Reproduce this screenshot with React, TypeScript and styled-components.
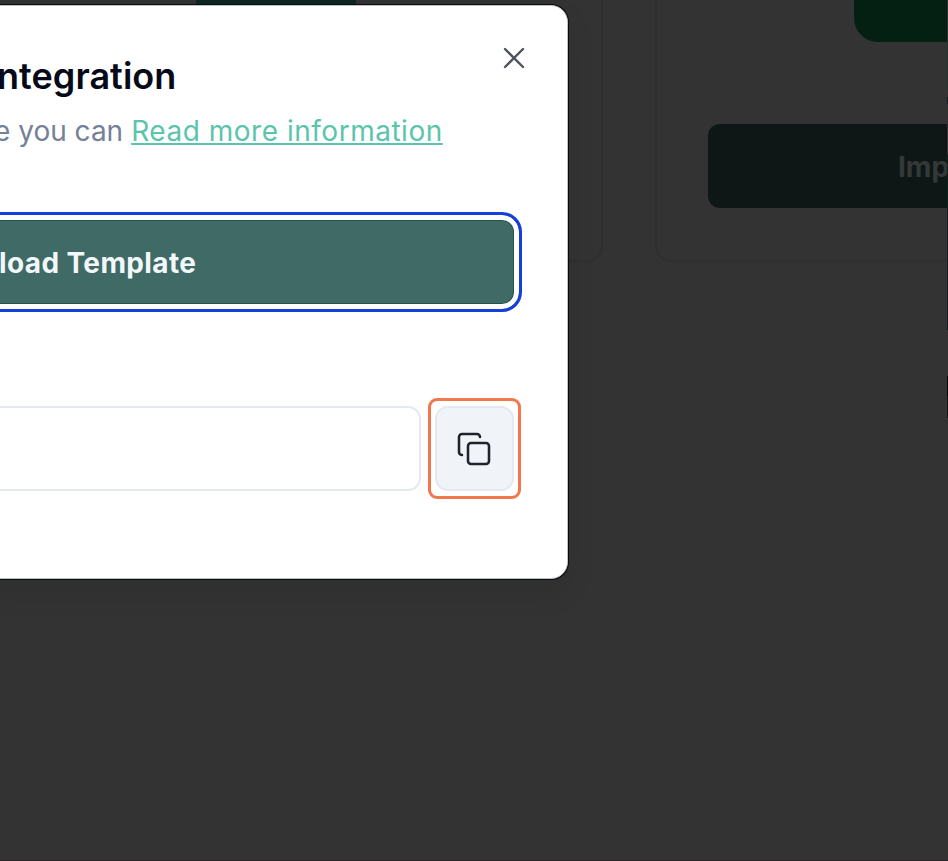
import React from "react";
import styled, { createGlobalStyle } from "styled-components";

const GlobalStyle = createGlobalStyle`
  *, *::before, *::after { box-sizing: border-box; }
  body { margin: 0; overflow: hidden; background: #333; font-family: "Inter", "Liberation Sans", sans-serif; }
  button { font: inherit; margin: 0; }
  h2, p { margin: 0; }
`;

const Page = styled.main`
  position: relative;
  width: 948px;
  height: 861px;
  overflow: hidden;
  background: #333;
  border-bottom: 1px solid #2b252b;
`;

const CardGrid = styled.div`
  display: grid;
  grid-template-columns: 603px 400px;
  column-gap: 52px;
  height: 262px;
`;

const Card = styled.section<{ $first?: boolean }>`
  display: flex;
  flex-direction: column;
  border: 2px solid #2f2f30;
  border-top: 0;
  border-left-width: ${(p) => (p.$first ? 0 : "2px")};
  border-radius: 0 0 16px 16px;
  padding-left: ${(p) => (p.$first ? "196px" : "51px")};
`;

const GreenTile = styled.div`
  width: 200px;
  height: 42px;
  margin-left: 146px;
  border-radius: 0 0 0 24px;
  background: #032013;
`;

const HiddenAction = styled.div`
  width: 160px;
  height: 10px;
  background: #0e2723;
`;

const ImportButton = styled.button`
  width: 330px;
  height: 84px;
  margin-top: 82px;
  padding: 2px 0 0 190px;
  border: 0;
  border-radius: 12px;
  background: #0e1716;
  color: #343838;
  text-align: left;
  font-size: 28px;
  font-weight: 700;
`;

const Dialog = styled.div`
  position: absolute;
  top: 5px;
  left: -20px;
  width: 588px;
  height: 574px;
  display: flex;
  flex-direction: column;
  padding-right: 46px;
  border: 1px solid #bdc3cc;
  border-radius: 17px;
  background: #fff;
  box-shadow: 0 0 0 1px #0b0b0c, 0 14px 30px rgba(0, 0, 0, 0.09);
`;

const Header = styled.header`
  display: flex;
  justify-content: space-between;
  height: 103px;
  padding: 48px 0 0 16px;
`;

const Title = styled.h2`
  font-size: 36px;
  line-height: 44px;
  font-weight: 600;
  letter-spacing: 0.05px;
  color: #060917;
  white-space: nowrap;
`;

const CloseButton = styled.button`
  width: 28px;
  height: 28px;
  margin: -10px -7px 0 0;
  padding: 0;
  border: 0;
  background: none;
  color: #4d525e;
`;

const Description = styled.p`
  display: flex;
  gap: 8px;
  height: 103px;
  padding-left: 13px;
  font-size: 28px;
  line-height: 44px;
  color: #748197;
  white-space: nowrap;
`;

const MoreLink = styled.a`
  color: #5bc4ac;
  letter-spacing: 0.52px;
  text-decoration: underline;
  text-decoration-thickness: 2px;
  text-underline-offset: 2px;
`;

const DownloadButton = styled.button`
  flex: none;
  width: 541px;
  height: 100px;
  padding: 2px 0 0 15px;
  border: 3px solid #143fdc;
  border-radius: 20px;
  background: #406a65;
  box-shadow: inset 0 0 0 5px #fff, inset 0 0 0 6px #24534e;
  color: #f2f7f9;
  text-align: left;
  font-size: 28px;
  font-weight: 700;
  letter-spacing: 0.38px;
`;

const CopyRow = styled.div`
  display: flex;
  align-items: center;
  gap: 8px;
  margin-top: 86px;
`;

const UrlInput = styled.input`
  width: 441px;
  height: 85px;
  margin-right: -1px;
  border: 2px solid #e4e9f1;
  border-radius: 13px;
  background: #fff;
  outline: 0;
`;

const CopyHighlight = styled.div`
  display: grid;
  place-items: center;
  width: 93px;
  height: 101px;
  border: 3px solid #f0784c;
  border-radius: 9px;
`;

const CopyButton = styled.button`
  display: grid;
  place-items: center;
  width: 79px;
  height: 85px;
  padding: 0 2px 0 0;
  border: 2px solid #e4e9f1;
  border-radius: 13px;
  background: #f0f4f9;
  color: #20222c;
`;

const ScreenEdge = styled.div`
  position: absolute;
  top: 0;
  right: 0;
  width: 1px;
  height: 860px;
  background: linear-gradient(
    #26352f 0 90px,
    #333 90px 97px,
    #171c2b 97px 104px,
    #333 104px 155px,
    #0d211d 155px 330px,
    #333 330px 376px,
    #060606 376px 396px,
    #141414 396px 418px,
    #333 418px
  );
`;

export default function App() {
  return (
    <Page>
      <GlobalStyle />
      <CardGrid>
        <Card $first><HiddenAction /></Card>
        <Card>
          <GreenTile />
          <ImportButton>Imp</ImportButton>
        </Card>
      </CardGrid>
      <ScreenEdge />
      <Dialog role="dialog">
        <Header>
          <Title>ntegration</Title>
          <CloseButton aria-label="Close">
            <svg width="28" height="28" viewBox="0 0 28 28" fill="none" stroke="currentColor" strokeWidth="2.4" strokeLinecap="round">
              <path d="M5 5l18 18M23 5L5 23" />
            </svg>
          </CloseButton>
        </Header>
        <Description>
          <span>e you can</span>
          <MoreLink>Read more information</MoreLink>
        </Description>
        <DownloadButton>load Template</DownloadButton>
        <CopyRow>
          <UrlInput readOnly />
          <CopyHighlight>
            <CopyButton aria-label="Copy">
              <svg width="36" height="36" viewBox="0 0 24 24" fill="none" stroke="currentColor" strokeWidth="1.7" strokeLinecap="round" strokeLinejoin="round">
                <rect x="8" y="8" width="14" height="14" rx="2" />
                <path d="M4 16c-1.1 0-2-.9-2-2V4c0-1.1.9-2 2-2h10c1.1 0 2 .9 2 2" />
              </svg>
            </CopyButton>
          </CopyHighlight>
        </CopyRow>
      </Dialog>
    </Page>
  );
}
